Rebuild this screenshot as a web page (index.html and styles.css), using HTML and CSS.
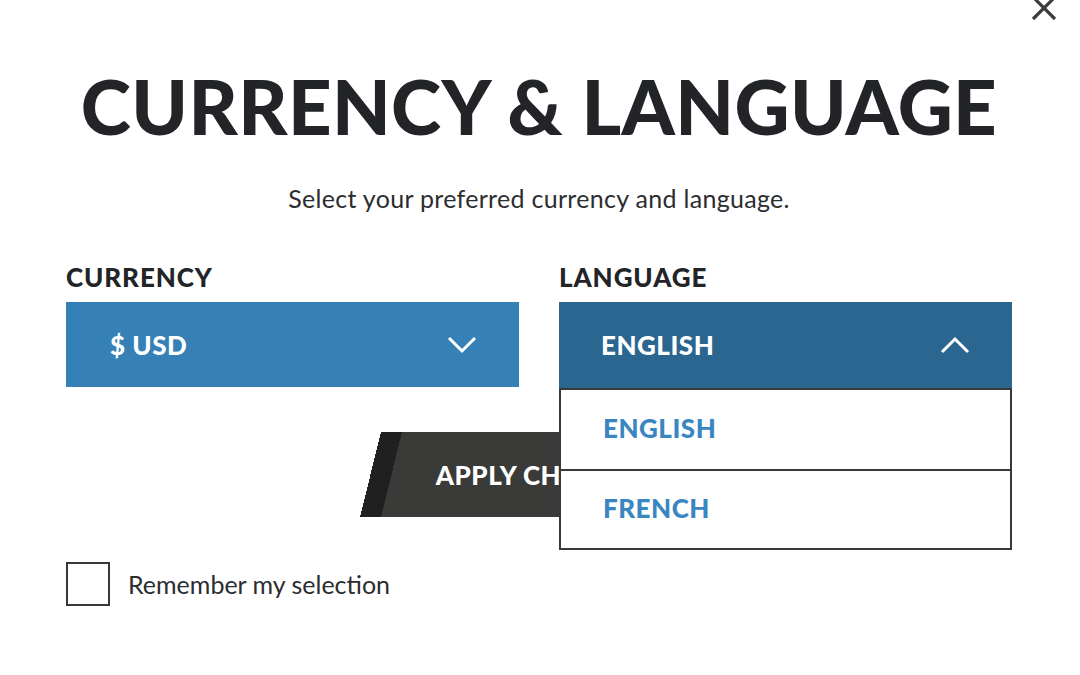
FILE: index.html
```html
<!DOCTYPE html>
<html lang="en">
<head>
<meta charset="utf-8">
<title>Currency &amp; Language</title>
<link rel="stylesheet" href="styles.css">
</head>
<body>
<div class="modal">
  <div class="topbar">
    <button class="close" aria-label="Close">
      <svg viewBox="0 0 26 26" width="26" height="26"><path d="M2 2 L24 24 M24 2 L2 24" stroke="#3c3d3f" stroke-width="3.2" fill="none"/></svg>
    </button>
  </div>
  <h1 class="title">CURRENCY &amp; LANGUAGE</h1>
  <p class="subtitle">Select your preferred currency and language.</p>
  <div class="fields">
    <div class="field">
      <div class="label">CURRENCY</div>
      <div class="select currency">
        <span>$ USD</span>
        <svg class="chev" viewBox="0 0 30 18" width="30" height="18"><path d="M2 2 L15 15 L28 2" stroke="#fff" stroke-width="3" fill="none"/></svg>
      </div>
    </div>
    <div class="field">
      <div class="label">LANGUAGE</div>
      <div class="select-wrap">
        <div class="select language">
          <span>ENGLISH</span>
          <svg class="chev" viewBox="0 0 30 18" width="30" height="18"><path d="M2 16 L15 3 L28 16" stroke="#fff" stroke-width="3" fill="none"/></svg>
        </div>
        <ul class="options">
          <li>ENGLISH</li>
          <li>FRENCH</li>
        </ul>
      </div>
    </div>
  </div>
  <div class="actions">
    <button class="apply">APPLY CHANGES</button>
  </div>
  <label class="remember"><span class="box"></span><span>Remember my selection</span></label>
</div>
</body>
</html>
```
FILE: styles.css
```css
* { box-sizing: border-box; }
html, body { margin: 0; padding: 0; background: #fff; }
body { font-family: Lato, "Noto Sans", sans-serif; color: #222428; }

.modal {
  width: 946px;
  margin: 0 0 0 66px;
  position: relative;
}
.topbar {
  height: 0;
  display: flex;
  justify-content: flex-end;
}
.close {
  position: absolute;
  top: -5px;
  right: -45px;
  border: 0;
  background: none;
  padding: 0;
  width: 26px;
  height: 26px;
}
.close svg { display: block; }

.title {
  margin: 0;
  padding-top: 67px;
  font-size: 76px;
  line-height: 78px;
  font-weight: 900;
  text-align: center;
  letter-spacing: 0.4px;
  color: #222428;
}
.subtitle {
  margin: 38px 0 0;
  font-size: 25px;
  line-height: 30px;
  text-align: center;
  letter-spacing: 0.3px;
  color: #2c2d30;
}
.fields {
  margin-top: 49px;
  display: grid;
  grid-template-columns: 453px 453px;
  column-gap: 40px;
}
.label {
  font-size: 26px;
  line-height: 30px;
  font-weight: 900;
  letter-spacing: 0.9px;
  color: #222428;
  margin-bottom: 10px;
}
.select {
  height: 85px;
  display: flex;
  align-items: center;
  justify-content: space-between;
  padding: 0 42px 0 44px;
  color: #fff;
  font-size: 26px;
  font-weight: 900;
  letter-spacing: 0.5px;
}
.language { padding-left: 42px; }
.currency { background: #3680b8; }
.language { background: #2a6690; height: 86px; }
.select-wrap { position: relative; }
.options {
  position: absolute;
  left: 0;
  right: 0;
  top: 86px;
  margin: 0;
  padding: 0;
  list-style: none;
  background: #fff;
  border: 2px solid #38393b;
  z-index: 2;
}
.options li {
  height: 79px;
  display: flex;
  align-items: center;
  padding-left: 42px;
  padding-bottom: 3px;
  color: #3a86c1;
  font-size: 26px;
  font-weight: 900;
  letter-spacing: 0.5px;
}
.options li + li { border-top: 2px solid #38393b; }

.actions {
  margin-top: 44px;
  display: flex;
  justify-content: center;
}
.apply {
  width: 358px;
  height: 85px;
  border: 0;
  padding: 0 0 0 8px;
  color: #fff;
  font-family: inherit;
  font-size: 26px;
  font-weight: 900;
  letter-spacing: 0.5px;
  background: linear-gradient(103.9deg, transparent 0 20.4px, #1f201f 20.4px 40.8px, #3a3a38 40.8px);
}

.remember {
  margin-top: 45px;
  display: flex;
  align-items: center;
  gap: 18px;
  font-size: 25px;
  color: #2c2d30;
}
.box {
  width: 44px;
  height: 44px;
  border: 2px solid #38393b;
}
```
